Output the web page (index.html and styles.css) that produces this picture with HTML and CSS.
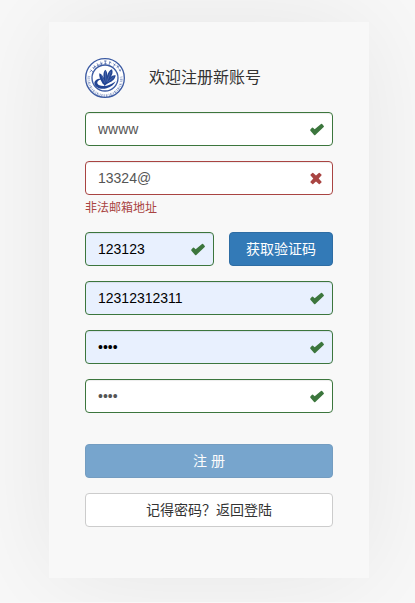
FILE: index.html
```html
<!DOCTYPE html>
<html lang="zh-CN">
<head>
<meta charset="utf-8">
<meta name="viewport" content="width=device-width, initial-scale=1">
<title>注册新账号</title>
<link rel="stylesheet" href="styles.css">
</head>
<body>
<svg class="symbols" aria-hidden="true">
  <symbol id="ok" viewBox="0 0 16 14"><path d="M1.4 6.5 3 4.8Q3.5 4.4 4 4.8L5.7 6.3 12 1Q12.6 0.6 13.1 1.1L14.8 2.9Q15.2 3.4 14.7 3.9L6.3 12Q5.7 12.5 5.1 11.9L1.4 7.7Q0.9 7.1 1.4 6.5Z"/></symbol>
  <symbol id="remove" viewBox="0 0 16 14"><path d="M4.2 0.9 7 3.5 9.8 0.9Q10.2 0.5 10.7 0.9L12.4 2.6Q12.9 3.1 12.4 3.6L9.7 6.5 12.4 9.4Q12.9 9.9 12.4 10.4L10.7 12.1Q10.2 12.5 9.8 12.1L7 9.4 4.2 12.1Q3.8 12.5 3.3 12.1L1.6 10.4Q1.1 9.9 1.6 9.4L4.3 6.5 1.6 3.6Q1.1 3.1 1.6 2.6L3.3 0.9Q3.8 0.5 4.2 0.9Z"/></symbol>
</svg>
<main class="card">
  <header class="head">
    <svg class="logo" viewBox="0 0 120 120" aria-hidden="true">
      <circle class="disc" cx="60" cy="60" r="58"/>
      <circle class="ring" cx="60" cy="60" r="39"/>
      <g class="marks">
        <path d="M14 42l6-5M17 35l7 7M23 28l5 6M27 22l4 10M25 29l9-5M36 16l5 9M36 24l8-5M47 11l3 10M45 19l8-4M57 9h8M61 8v12M58 17h7M73 12l6 3M75 10l-3 11M85 17l6 5M91 17l-6 9M95 28l7-4M96 22l5 9M102 39l6-4M101 33l7 7"/>
      </g>
      <path class="lettering" d="M12 54A49 49 0 1 0 108 54"/>
      <path class="fill" d="M53 77C46 66 41 55 43 46C50 48 53 53 56 60C54 48 56 39 61 35C66 39 67 46 67 53C69 43 74 36 81 34C85 43 82 51 76 59C80 53 86 51 92 52C91 63 82 71 71 75C65 78 61 80 59 85C58 81 56 79 53 77Z"/>
      <path class="vein" d="M49 51 60 75M61 40 63 71M77 41 66 71M87 56 68 72"/>
      <path class="fill" d="M51 63C38 61 28 67 28 76C29 89 48 96 65 91C79 87 87 79 92 70C83 77 74 81 65 83C52 86 39 83 37 76C36 69 44 65 51 63Z"/>
    </svg>
    <h1 class="title">欢迎注册新账号</h1>
  </header>
  <form class="form">
    <div class="field">
      <input class="control" type="text" aria-label="用户名" value="wwww">
      <svg class="mark"><use href="#ok"/></svg>
    </div>
    <div class="group">
      <div class="field error">
        <input class="control" type="text" aria-label="邮箱" aria-describedby="mail-error" value="13324@">
        <svg class="mark"><use href="#remove"/></svg>
      </div>
      <small class="help" id="mail-error">非法邮箱地址</small>
    </div>
    <div class="row">
      <div class="field">
        <input class="control filled" type="text" aria-label="验证码" value="123123">
        <svg class="mark"><use href="#ok"/></svg>
      </div>
      <button class="btn primary" type="button">获取验证码</button>
    </div>
    <div class="field">
      <input class="control filled" type="tel" aria-label="手机号" value="12312312311">
      <svg class="mark"><use href="#ok"/></svg>
    </div>
    <div class="field">
      <input class="control filled" type="password" aria-label="密码" value="wwww">
      <svg class="mark"><use href="#ok"/></svg>
    </div>
    <div class="field">
      <input class="control" type="password" aria-label="确认密码" value="wwww">
      <svg class="mark"><use href="#ok"/></svg>
    </div>
    <div class="actions">
      <button class="btn primary" type="submit" disabled>注 册</button>
      <a class="btn plain" href="#">记得密码？返回登陆</a>
    </div>
  </form>
</main>
</body>
</html>
```
FILE: styles.css
```css
* {
  box-sizing: border-box;
}

body {
  margin: 0;
  padding: 22px 46px 24px 49px;
  background: #f8f8f8;
  color: #333;
  font: 14px/20px "Liberation Sans", "Noto Sans CJK SC", sans-serif;
}

.symbols {
  position: absolute;
  width: 0;
  height: 0;
}

.card {
  max-width: 320px;
  margin: 0 auto;
  padding: 35px 36px 51px;
  background: #f8f8f8;
  box-shadow: 0 0 100px rgba(0, 0, 0, 0.08);
}

.head {
  display: flex;
  align-items: center;
  gap: 24px;
  margin-bottom: 13px;
}

.logo {
  width: 40px;
  height: 42px;
  fill: none;
  stroke: #3c5ba3;
}

.disc {
  fill: #fff;
  stroke-width: 4;
}

.ring {
  stroke-width: 4;
}

.marks {
  stroke-width: 2;
}

.lettering {
  stroke-width: 8;
  stroke-dasharray: 2 3 3 2 1 3;
  opacity: 0.65;
}

.fill {
  fill: #234594;
  stroke: none;
}

.vein {
  stroke: #fff;
  stroke-width: 1;
  opacity: 0.5;
}

.title {
  margin: 0;
  font-size: 16px;
  font-weight: 400;
  line-height: 20px;
}

.form,
.actions {
  display: flex;
  flex-direction: column;
  gap: 15px;
}

.actions {
  margin-top: 16px;
}

.row {
  display: flex;
  gap: 15px;
}

.row .field {
  flex: 1;
  min-width: 0;
}

.field {
  position: relative;
  color: #3c763d;
}

.error {
  color: #a94442;
}

.control {
  display: block;
  width: 100%;
  height: 34px;
  padding: 6px 36px 6px 12px;
  border: 1px solid #3c763d;
  border-radius: 4px;
  background: #fff;
  box-shadow: inset 0 1px 1px rgba(0, 0, 0, 0.075);
  color: #555;
  font: inherit;
}

.error .control {
  border-color: #a94442;
}

.filled {
  background: #e8f0fe;
  color: #000;
}

.mark {
  position: absolute;
  top: 11px;
  right: 8px;
  width: 16px;
  height: 14px;
  fill: currentColor;
  pointer-events: none;
}

.help {
  display: block;
  margin-top: 4px;
  color: #a94442;
  font-size: 12px;
  line-height: 18px;
}

.btn {
  height: 34px;
  padding: 6px 16px;
  border: 1px solid #ccc;
  border-radius: 4px;
  font: inherit;
  text-align: center;
  text-decoration: none;
  white-space: nowrap;
}

.primary {
  border-color: #2e6da4;
  background: #337ab7;
  color: #fff;
}

.primary:disabled {
  opacity: 0.65;
}

.plain {
  background: #fff;
  color: #333;
}
```
